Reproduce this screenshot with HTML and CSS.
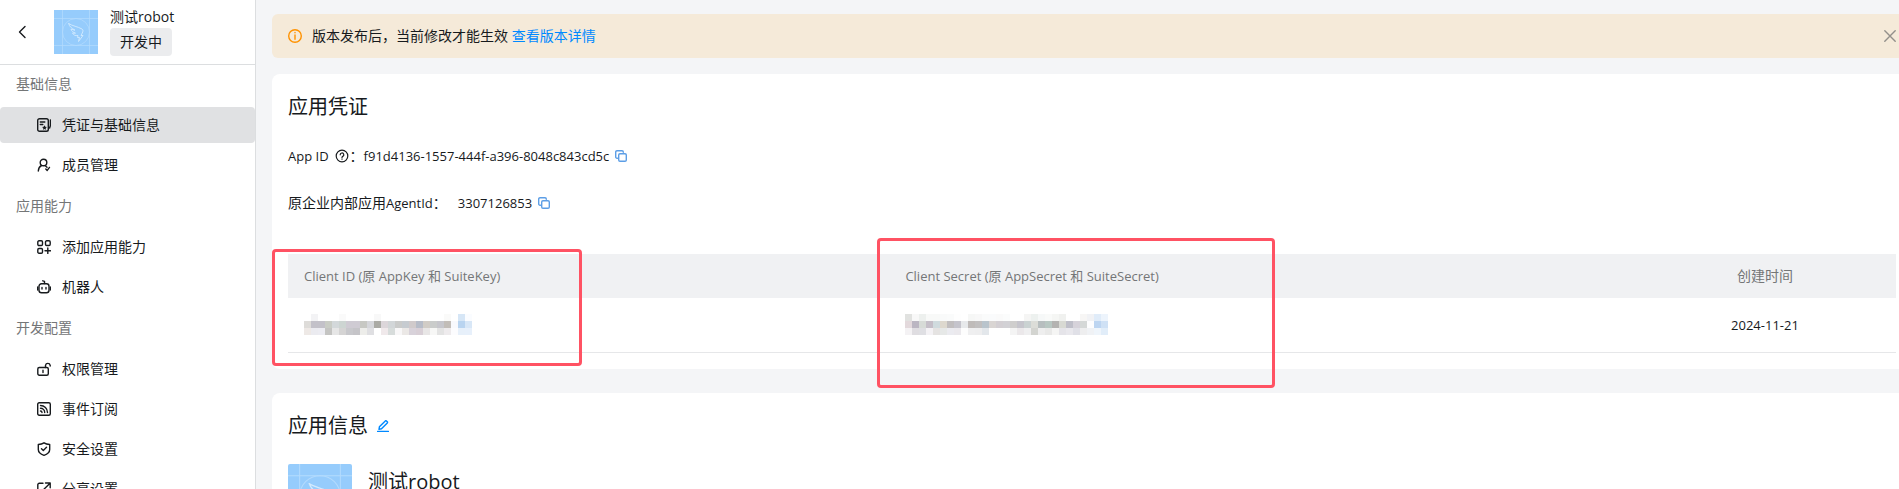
FILE: index.html
```html
<!DOCTYPE html>
<html lang="zh-CN">
<head>
    <meta charset="UTF-8">
    <meta name="viewport" content="width=device-width, initial-scale=1.0">
    <title>测试robot</title>
    <link rel="stylesheet" href="styles.css">
</head>
<body>
    <aside class="sidebar">
        <header class="app-header">
            <button class="icon-button back-button" aria-label="返回">
                <svg class="icon" width="16" height="16" viewBox="0 0 16 16"><path d="M11 2.500 5.500 8l5.500 5.500"/></svg>
            </button>
            <svg class="app-logo" viewBox="0 0 44 44">
                <g class="logo-grid">
                    <path d="M8.500 0v44M35.500 0v44M0 8.500h44M0 35.500h44"/>
                    <circle cx="22" cy="22" r="13.500"/>
                </g>
                <path class="logo-wing" d="M14.500 13.500c4 2.500 9 3 13.500 5.500 1.500 1 1 2.500.3 4l-1.300 2.500h2l-4.500 6 1-4h-2l.5-2c-3 .5-4.500-.5-5.500-2.500l3 .2c-2.500-1-4-2-4.500-4l4 1c-3.500-2-6-4-6.200-6.700z"/>
            </svg>
            <div class="app-meta">
                <span class="app-name">测试robot</span>
                <span class="app-status">开发中</span>
            </div>
        </header>
        <nav class="menu">
            <h2 class="menu-title">基础信息</h2>
            <a class="menu-item active" href="#">
                <svg class="icon" width="14" height="14" viewBox="0 0 14 14"><rect x=".7" y=".7" width="10.600" height="12.600" rx="1.800"/><path d="M3.300 4h4.500M3.300 6.500h2.500M13.400 2v5.500l-.8 2.500"/><path class="fill" d="m7.500 7.300.8 1.500 1.700.2-1.300 1.100.4 1.700-1.600-.8-1.500.8.3-1.700L5 9l1.700-.2z"/></svg>
                凭证与基础信息
            </a>
            <a class="menu-item" href="#">
                <svg class="icon" width="14" height="14" viewBox="0 0 14 14"><circle cx="6.500" cy="4.500" r="3.300"/><path d="M4.500 7.500C2.500 8.500 1.500 10.500 1.300 13M8 7.500l2 1.700M8.800 11l1.400 1.400 2.300-3"/></svg>
                成员管理
            </a>
            <h2 class="menu-title">应用能力</h2>
            <a class="menu-item" href="#">
                <svg class="icon" width="14" height="14" viewBox="0 0 14 14"><rect x=".8" y=".8" width="4.700" height="4.700" rx="1.200"/><rect x="8.500" y=".8" width="4.700" height="4.700" rx="1.200"/><rect x=".8" y="8.500" width="4.700" height="4.700" rx="1.200"/><path d="M10.800 8v5.600M8 10.800h5.600"/></svg>
                添加应用能力
            </a>
            <a class="menu-item" href="#">
                <svg class="icon" width="14" height="14" viewBox="0 0 14 14"><rect x="2" y="3.700" width="10" height="9" rx="2.500"/><path d="M7.500 3.500V1.300L5.800.8M.7 7v3M13.300 7v3M5 7.500v1.500M9 7.500v1.500"/></svg>
                机器人
            </a>
            <h2 class="menu-title">开发配置</h2>
            <a class="menu-item" href="#">
                <svg class="icon" width="14" height="14" viewBox="0 0 14 14"><rect x=".8" y="5.500" width="10.500" height="7.700" rx="1.500"/><path d="M8.500 5.500V3.300a2.400 2.400 0 0 1 4.700 0V4M6 8.300v2.200"/></svg>
                权限管理
            </a>
            <a class="menu-item" href="#">
                <svg class="icon" width="14" height="14" viewBox="0 0 14 14"><rect x=".7" y=".7" width="12.600" height="12.600" rx="1.500"/><path d="M3.500 3.500a7 7 0 0 1 7 7M3.500 6.300a4.200 4.200 0 0 1 4.200 4.200M3.500 9a1.500 1.500 0 0 1 1.500 1.500"/></svg>
                事件订阅
            </a>
            <a class="menu-item" href="#">
                <svg class="icon" width="14" height="14" viewBox="0 0 14 14"><path d="M7 .8c1.800 1.200 3.700 1.600 5.700 1.700v5c0 2.800-2.500 4.700-5.700 5.800C3.800 12.200 1.300 10.300 1.300 7.500v-5C3.300 2.400 5.200 2 7 .8zM4.500 6.800 6.300 8.500 9.500 5.300"/></svg>
                安全设置
            </a>
            <a class="menu-item" href="#">
                <svg class="icon" width="14" height="14" viewBox="0 0 14 14"><path d="M6 1.300H2.300a1.500 1.500 0 0 0-1.500 1.500v9a1.500 1.500 0 0 0 1.500 1.500h9a1.500 1.500 0 0 0 1.500-1.500V8M8.500 1h4.700v4.700M13 1.200 6 8.200"/></svg>
                分享设置
            </a>
        </nav>
    </aside>

    <main class="content">
        <div class="alert">
            <svg class="icon alert-icon" width="14" height="14" viewBox="0 0 14 14"><circle cx="7" cy="7" r="6.300"/><path d="M7 6v4.300M7 3.500v.300"/></svg>
            <span>版本发布后，当前修改才能生效 <a class="link" href="#">查看版本详情</a></span>
            <button class="icon-button alert-close" aria-label="关闭">
                <svg class="icon" width="12" height="12" viewBox="0 0 12 12"><path d="M.8.8l10.400 10.400M11.200.8.8 11.200"/></svg>
            </button>
        </div>

        <section class="card">
            <h1 class="card-title">应用凭证</h1>
            <div class="field">
                <span class="latin">App ID</span>
                <svg class="icon help-icon" width="14" height="14" viewBox="0 0 14 14"><circle cx="7" cy="7" r="5.800"/><path d="M5.200 5.800a1.800 1.800 0 1 1 2.600 1.600c-.6.300-.8.600-.8 1.100M7 9.900v.300"/></svg>
                <span>：</span>
                <span class="latin">f91d4136-1557-444f-a396-8048c843cd5c</span>
                <button class="icon-button copy-button" aria-label="复制">
                    <svg class="icon" width="12" height="12" viewBox="0 0 12 12"><path d="M2.500 8.200H2A1.300 1.300 0 0 1 .7 6.900V2A1.300 1.300 0 0 1 2 .7h5A1.300 1.300 0 0 1 8.300 2v.3"/><rect x="3.700" y="3.700" width="7.600" height="7.600" rx="1.300"/></svg>
                </button>
            </div>
            <div class="field">
                <span class="field-label">原企业内部应用<span class="latin">AgentId</span>：</span>
                <span class="latin">3307126853</span>
                <button class="icon-button copy-button" aria-label="复制">
                    <svg class="icon" width="12" height="12" viewBox="0 0 12 12"><path d="M2.500 8.200H2A1.300 1.300 0 0 1 .7 6.900V2A1.300 1.300 0 0 1 2 .7h5A1.300 1.300 0 0 1 8.300 2v.3"/><rect x="3.700" y="3.700" width="7.600" height="7.600" rx="1.300"/></svg>
                </button>
            </div>
            <div class="keys-wrap">
                <table class="keys">
                    <thead>
                        <tr>
                            <th class="col-id">Client ID (原 AppKey 和 SuiteKey)</th>
                            <th class="col-secret">Client Secret (原 AppSecret 和 SuiteSecret)</th>
                            <th class="col-date">创建时间</th>
                        </tr>
                    </thead>
                    <tbody>
                        <tr>
                            <td><svg class="mosaic" id="client-id"></svg></td>
                            <td><svg class="mosaic" id="client-secret"></svg></td>
                            <td class="col-date">2024-11-21</td>
                        </tr>
                    </tbody>
                </table>
                <div class="mark mark-id"></div>
                <div class="mark mark-secret"></div>
            </div>
        </section>

        <section class="card">
            <h1 class="card-title">
                应用信息
                <button class="icon-button edit-button" aria-label="编辑">
                    <svg class="icon" width="12" height="12" viewBox="0 0 12 12"><path d="M.5 11.500h11M2 9.300l.4-2.500L8.300.9a.8.8 0 0 1 1.100 0l.9.9a.8.8 0 0 1 0 1.100L4.500 8.800z"/></svg>
                </button>
            </h1>
            <div class="app-info">
                <svg class="info-logo" viewBox="0 0 44 44">
                    <g class="logo-grid">
                        <path d="M8 0v44M36 0v44M0 8h44M0 36h44"/>
                        <circle cx="22" cy="22" r="14"/>
                    </g>
                    <path class="logo-wing" d="M14.500 13.500c4 2.500 9 3 13.500 5.500 1.500 1 1 2.500.3 4l-1.300 2.500h2l-4.500 6 1-4h-2l.5-2c-3 .5-4.500-.5-5.500-2.500l3 .2c-2.500-1-4-2-4.500-4l4 1c-3.500-2-6-4-6.200-6.700z"/>
                </svg>
                <span class="info-name">测试robot</span>
            </div>
        </section>
    </main>

    <script>
        // hidden values are shown as rows of coloured blocks
        const size = 7;

        const clientId = [
            'fff f3f3f5 fff fff fff fafafa fff fff fff fff f8f8f8 fff fff fff fff fff fff fff fff fff fafaf9 fff d6e6f6 fafcff',
            'dedcd9 c3c1c9 c3c1c9 c9ccc5 d3d8da cdd5d2 cfcbd3 cfcbd3 c7c8c3 d5d6da aaaaa4 dcd6da d2d6d8 cacbca c6cbd0 d0cacb b7bcc8 d1ccc6 cacccb c6c6cc c2bdb8 f8f9fd b9d4f0 d8e7f7',
            'eee9e6 ebebf0 ececf2 c4c4c2 e6e6e6 d5d4d4 c8c8cc c5c4c8 ededea dfdfe2 fff f0e9eb d7dcdb f8f7f8 ebe8e6 d8d2da d8cfd6 e8e6e6 f7f7f6 e3e3e3 eeebed fcfcfe e7f0fa e7f0fb'
        ];

        const clientSecret = [
            'e1e2e0 f8f8f8 edf0ee f8f9f8 f8f9f8 f9fafa fafbfb fefefe fff f6f7f6 f8f8f8 fafbfb fafbfc fafafa fbfcfc fff fff f5f5f4 edf1ef f6f8f8 f9faf9 f5f6f4 f0f1ef fff fff f7f6f5 f1f2f5 e0ecf9 edf4fc',
            'e3d9dc bbb6c2 d7dbd7 c5bfc8 d0dbde ddd8ce c1bebf c5c4cc e7e9eb bfbbb9 c1bfbf b9c4cc d9d5d3 d3cfd3 d2d1d5 cfcecd c6c5cc cad2d2 dcddd8 b7bebf b8c7c2 b4b3b1 d8d9d3 bfbfc9 d6d2da d5d8d7 fdfdfe bdd5f1 cfe1f5',
            'f4f2f4 dfdde1 dfdfe3 f4f2f5 e5e3e2 e6e8e7 ebebf0 ebe9ed fdfdfd efeff0 eeeeef e3e7eb fff fff fff f4f4f4 ebe8ea efeff0 d3d4d0 eeeeee e9e9e8 f5f5f4 e5e4e9 e9e8ed e0e0e7 eeeeef f0f2f5 eff5fb e1edf9'
        ];

        function drawMosaic(id, rows) {
            const svg = document.getElementById(id);
            rows.forEach((row, y) => {
                const colors = row.split(' ');
                svg.setAttribute('width', colors.length * size);
                svg.setAttribute('height', rows.length * size);
                colors.forEach((color, x) => {
                    const rect = document.createElementNS('http://www.w3.org/2000/svg', 'rect');
                    rect.setAttribute('x', x * size);
                    rect.setAttribute('y', y * size);
                    rect.setAttribute('width', size);
                    rect.setAttribute('height', size);
                    rect.setAttribute('fill', '#' + color);
                    svg.appendChild(rect);
                });
            });
        }

        drawMosaic('client-id', clientId);
        drawMosaic('client-secret', clientSecret);
    </script>
</body>
</html>
```

FILE: styles.css
```css
* {
    box-sizing: border-box;
}

body {
    margin: 0;
    display: flex;
    height: 100vh;
    overflow: hidden;
    background-color: #f4f5f7;
    color: #171a1d;
    font-family: "Open Sans", "Noto Sans CJK SC", sans-serif;
    font-size: 14px;
    line-height: 22px;
}

.icon {
    display: block;
    flex-shrink: 0;
    fill: none;
    stroke: currentColor;
    stroke-width: 1.4;
    stroke-linecap: round;
    stroke-linejoin: round;
}

.icon .fill {
    fill: currentColor;
    stroke: none;
}

.icon-button {
    display: block;
    padding: 0;
    border: none;
    background: none;
    color: inherit;
    cursor: pointer;
}

.latin {
    font-size: 13px;
}

/* sidebar */
.sidebar {
    flex: 0 0 256px;
    background-color: #fff;
    border-right: 1px solid #dcdee0;
}

.app-header {
    display: flex;
    align-items: center;
    height: 65px;
    padding: 0 14px;
    border-bottom: 1px solid #dcdee0;
}

.back-button {
    margin-right: 24px;
}

.app-logo {
    width: 44px;
    height: 44px;
    margin-right: 12px;
    background-color: #96ccfc;
}

.logo-grid {
    fill: none;
    stroke: #b4dbfd;
    stroke-width: 0.7;
}

.logo-wing {
    fill: none;
    stroke: #d2eafe;
    stroke-width: 0.9;
    stroke-linejoin: round;
}

.app-meta {
    display: flex;
    flex-direction: column;
    align-items: flex-start;
    padding-bottom: 2px;
}

.app-status {
    padding: 3px 10px;
    border-radius: 4px;
    background-color: #ebecee;
}

.menu {
    display: flex;
    flex-direction: column;
    gap: 4px;
}

.menu-title {
    margin: 0;
    padding: 8px 16px;
    color: #747677;
    font-size: 14px;
    font-weight: normal;
}

.menu-item {
    display: flex;
    align-items: center;
    gap: 11px;
    height: 36px;
    padding-left: 37px;
    border-radius: 4px;
    color: #171a1d;
    text-decoration: none;
}

.menu-item.active {
    background-color: #e0e1e3;
}

/* the content column runs a little past the right edge */
.content {
    flex: 1;
    min-width: 0;
    margin-right: -13px;
    padding: 14px 0 0 16px;
}

.alert {
    display: flex;
    align-items: center;
    height: 44px;
    margin-bottom: 16px;
    padding: 0 16px;
    border-radius: 6px;
    background-color: #f5ead9;
}

.alert-icon {
    margin-right: 10px;
    color: #ff9200;
}

.link {
    color: #0089ff;
    text-decoration: none;
}

.alert-close {
    margin-left: auto;
    color: #93908b;
}

.card {
    margin-bottom: 24px;
    padding: 20px 16px 16px;
    border-radius: 8px;
    background-color: #fff;
}

.card-title {
    display: flex;
    align-items: center;
    gap: 9px;
    margin: 0 0 25px;
    font-size: 20px;
    font-weight: normal;
    line-height: 26px;
}

.field {
    display: flex;
    align-items: center;
    margin-bottom: 25px;
}

.field-label {
    margin-right: 11px;
}

.help-icon {
    margin: 0 1px 0 6px;
    stroke-width: 1.2;
}

.copy-button {
    margin-left: 6px;
    color: #5c9ee6;
}

.edit-button {
    color: #0089ff;
}

.keys-wrap {
    position: relative;
    margin-top: 40px;
}

.keys {
    width: 100%;
    table-layout: fixed;
    border-collapse: collapse;
    font-size: 13px;
}

.keys th {
    height: 44px;
    padding: 0 16px;
    background-color: #f0f1f3;
    color: #747677;
    font-weight: normal;
    text-align: left;
}

.keys td {
    height: 54px;
    padding: 0 16px;
    border-bottom: 1px solid #e6e7e9;
}

.col-id {
    width: 37.4%;
}

.keys .col-date {
    width: 16.3%;
    text-align: center;
}

.keys th.col-date {
    font-size: 14px;
}

.mosaic {
    display: block;
}

/* red boxes over the two key columns */
.mark {
    position: absolute;
    border: 3px solid #ff5263;
    border-radius: 4px;
}

.mark-id {
    left: -16px;
    top: -5px;
    width: 310px;
    height: 117px;
}

.mark-secret {
    left: calc(37.4% - 12px);
    top: -16px;
    width: 398px;
    height: 150px;
}

.app-info {
    display: flex;
    align-items: flex-start;
    gap: 16px;
}

.info-logo {
    width: 64px;
    height: 64px;
    border-radius: 2px;
    background-color: #96ccfc;
}

.info-name {
    padding-top: 5px;
    font-size: 20px;
    line-height: 26px;
}
```
